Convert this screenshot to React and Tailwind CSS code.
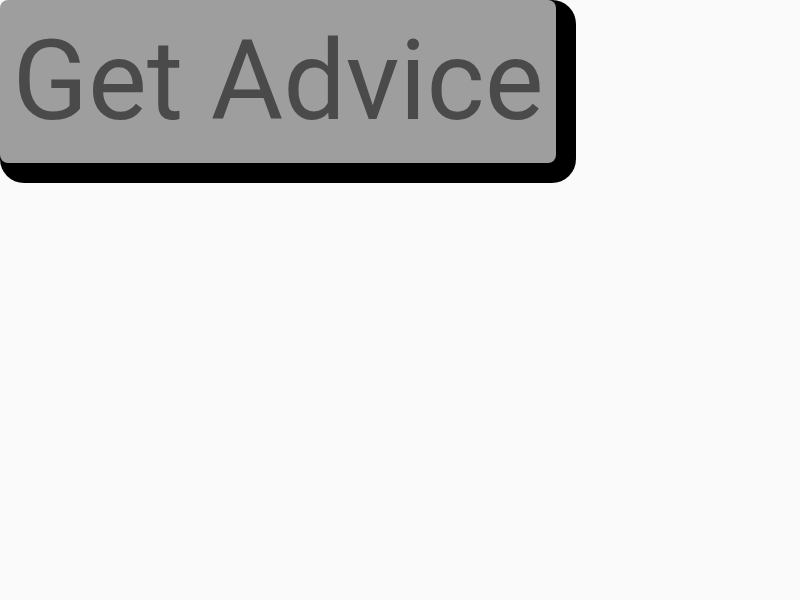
export default function App() {
  return (
    <div className="min-h-screen w-full bg-[#fafafa] font-['Roboto',sans-serif]">
      <div className="flex items-start">
        <div className="flex rounded-[24px] bg-black pr-5 pb-5">
          <button className="flex h-[163px] w-[556px] items-center justify-center rounded-lg bg-[#9e9e9e] font-['Roboto',sans-serif] text-[111px] leading-none text-[#4a4a4a]">
            Get Advice
          </button>
        </div>
      </div>
    </div>
  );
}
